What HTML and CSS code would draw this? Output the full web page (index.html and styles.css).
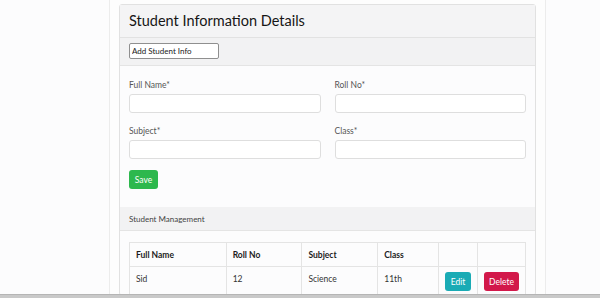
FILE: index.html
```html
<!DOCTYPE html>
<html lang="en">
  <head>
    <meta charset="UTF-8" />
    <title>Student Information Details</title>
    <link rel="stylesheet" href="styles.css">
  </head>

  <body>
    <div class="page">
      <div class="card">
        <div class="card-title">Student Information Details</div>

        <div class="card-sub">
          <input class="add-box" type="text" value="Add Student Info" />
        </div>

        <form class="card-body">
          <div class="row">
            <div class="field">
              <label>Full Name*</label>
              <input type="text" />
            </div>
            <div class="field">
              <label>Roll No*</label>
              <input type="text" />
            </div>
          </div>
          <div class="row">
            <div class="field">
              <label>Subject*</label>
              <input type="text" />
            </div>
            <div class="field">
              <label>Class*</label>
              <input type="text" />
            </div>
          </div>
          <button class="btn btn-save" type="button">Save</button>
        </form>

        <div class="card-sub sub-text">Student Management</div>

        <div class="table-wrap">
          <table class="list">
            <thead>
              <tr>
                <th class="c1">Full Name</th>
                <th class="c2">Roll No</th>
                <th class="c3">Subject</th>
                <th class="c4">Class</th>
                <th class="c5"></th>
                <th class="c6"></th>
              </tr>
            </thead>
            <tbody>
              <tr>
                <td>Sid</td>
                <td>12</td>
                <td>Science</td>
                <td>11th</td>
                <td class="act"><button class="btn btn-edit" type="button">Edit</button></td>
                <td class="act"><button class="btn btn-del" type="button">Delete</button></td>
              </tr>
            </tbody>
          </table>
        </div>
      </div>
    </div>
    <div class="hscroll"></div>
  </body>
</html>
```

FILE: styles.css
```css
* {
  padding: 0px;
  margin: 0px;
  box-sizing: border-box;
}

html,
body {
  width: 100%;
  height: 100%;
  overflow: hidden;
}

body {
  background: #fcfcfd;
  font-family: Lato, "Open Sans", sans-serif;
  font-size: 9px;
  color: #222;
}

.page {
  width: 437px;
  margin-left: 109px;
  padding: 4px 9px 0 9px;
  border-left: 1px solid #ececec;
  border-right: 1px solid #ececec;
  min-height: 100%;
  background: #fdfdfd;
}

.card {
  border: 1px solid #e1e1e1;
  border-radius: 3px;
  background: #fcfcfd;
}

.card-title {
  height: 33px;
  padding: 7px 9px 0;
  font-size: 14.5px;
  line-height: 18px;
  color: #161616;
  background: #f4f4f5;
  border-bottom: 1px solid #e2e2e2;
}

.card-sub {
  height: 28px;
  padding: 5px 9px 0;
  background: #f2f2f3;
  border-bottom: 1px solid #e4e4e4;
}

.add-box {
  display: block;
  width: 90px;
  height: 16px;
  border: 1px solid #8f8f8f;
  border-radius: 2px;
  background: #fff;
  padding: 0 2px;
  font-family: inherit;
  font-size: 8px;
  color: #222;
}

.sub-text {
  height: 24px;
  padding-top: 6px;
  font-size: 8px;
  line-height: 12px;
  color: #444;
}

.card-body {
  padding: 13px 9px 18px;
}

.row {
  display: flex;
  gap: 14px;
  margin-bottom: 11px;
}

.row:first-child {
  margin-bottom: 12px;
}

.field {
  flex: 1;
  display: flex;
  flex-direction: column;
}

.field label {
  font-size: 8.5px;
  color: #555;
  height: 15px;
  line-height: 12px;
}

.field input {
  display: block;
  height: 19px;
  border: 1px solid #dedede;
  border-radius: 3px;
  background: #fff;
}

.btn {
  display: block;
  border: none;
  border-radius: 3px;
  color: #fff;
  font-family: inherit;
  font-size: 8.5px;
  height: 19px;
  cursor: pointer;
}

.btn-save {
  width: 29px;
  background: #2db84d;
}

.btn-edit {
  width: 26px;
  margin: 0 auto;
  background: #1aabb5;
}

.btn-del {
  width: 35px;
  margin: 0 auto;
  background: #d2184a;
}

.table-wrap {
  padding: 11px 9px 0;
}

.list {
  width: 397px;
  border-collapse: collapse;
  font-size: 8.5px;
  color: #333;
}

.list th,
.list td {
  border: 1px solid #e4e4e4;
  text-align: left;
  padding: 0 6px;
}

.list th {
  height: 24px;
  font-weight: bold;
  color: #1b1b1b;
}

.list td {
  height: 28px;
  vertical-align: top;
  padding-top: 7px;
}

.list td.act {
  padding: 5px 0 0;
}

.c1 { width: 97px; }
.c2 { width: 76px; }
.c3 { width: 76px; }
.c4 { width: 61px; }
.c5 { width: 39px; }
.c6 { width: 48px; }

.hscroll {
  position: fixed;
  left: 0;
  right: 0;
  bottom: 0;
  height: 4px;
  background: #c9c9c9;
  border-top: 1px solid #b5b5b5;
}
```
